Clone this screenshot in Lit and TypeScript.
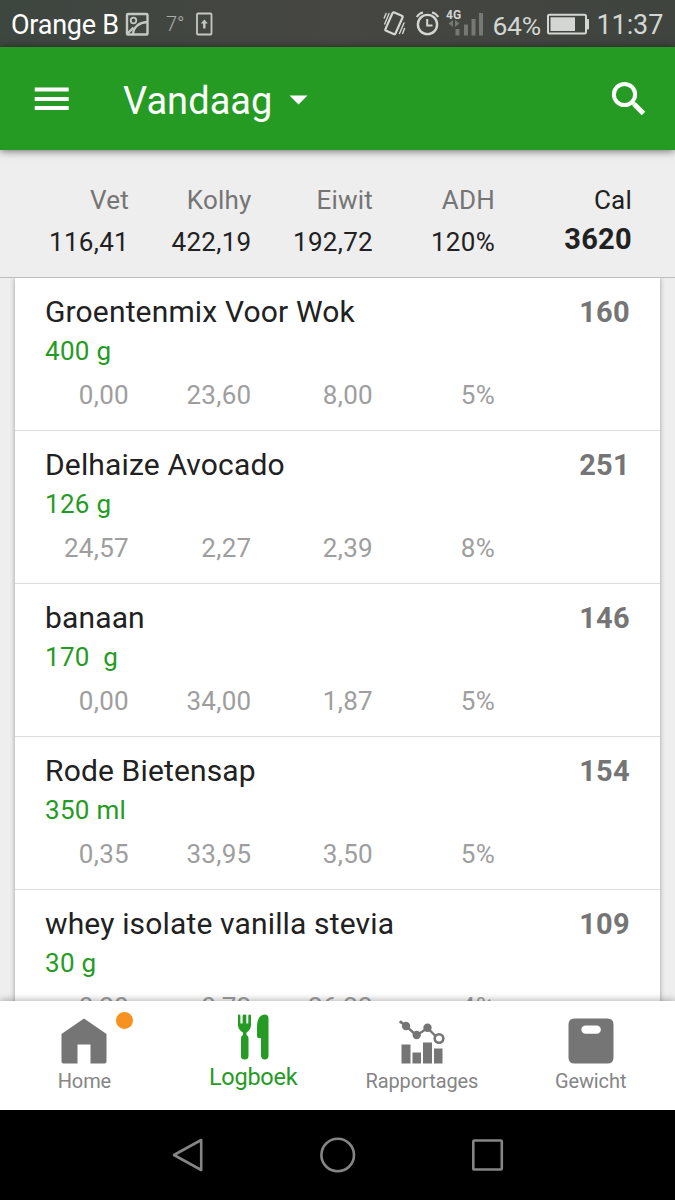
import { LitElement, html, css, svg } from "lit";
import { customElement, property } from "lit/decorators.js";
import { classMap } from "lit/directives/class-map.js";

interface Entry {
  name: string;
  amount: string;
  calories: string;
  values: string[];
}

const ENTRIES: Entry[] = [
  { name: "Groentenmix Voor Wok", amount: "400 g", calories: "160", values: ["0,00", "23,60", "8,00", "5%"] },
  { name: "Delhaize Avocado", amount: "126 g", calories: "251", values: ["24,57", "2,27", "2,39", "8%"] },
  { name: "banaan", amount: "170  g", calories: "146", values: ["0,00", "34,00", "1,87", "5%"] },
  { name: "Rode Bietensap", amount: "350 ml", calories: "154", values: ["0,35", "33,95", "3,50", "5%"] },
  { name: "whey isolate vanilla stevia", amount: "30 g", calories: "109", values: ["0,20", "0,72", "26,22", "4%"] },
];

const TOTALS = [
  { label: "Vet", value: "116,41" },
  { label: "Kolhy", value: "422,19" },
  { label: "Eiwit", value: "192,72" },
  { label: "ADH", value: "120%" },
  { label: "Cal", value: "3620" },
];

@customElement("status-bar")
class StatusBar extends LitElement {
  static styles = css`
    :host {
      display: flex;
      align-items: center;
      height: 47px;
      padding: 0 11px 0 11px;
      background: linear-gradient(90deg, #3e4640, #464642 50%, #3f443f);
      color: #d3d6d2;
      font-size: 27px;
      white-space: nowrap;
    }
    svg, .text { display: block; flex: none; }
    .carrier { color: #fff; width: 114px; letter-spacing: -0.25px; padding-top: 3px; }
    .temp { margin-left: 17px; width: 30px; font-size: 20px; font-weight: 300; color: #a9ada8; }
    .right { margin-left: auto; display: flex; align-items: center; }
    .text { padding-top: 3px; }
    .alarm { margin: 0 0.5px 0 1px; }
    .percent { margin-left: 1px; width: 52px; font-size: 26.5px; letter-spacing: -0.3px; }
    .time { margin-left: 5px; width: 67.5px; letter-spacing: -0.1px; }
    .net { font: 700 12px Roboto, sans-serif; }
  `;
  render() {
    return html`
      <span class="carrier">Orange B</span>
      <svg width="24" height="24" viewBox="0 0 24 24" fill="none" stroke="#c3c9c2" stroke-width="2.4">
        <rect x="2" y="2" width="20.5" height="20.5" rx="1" />
        <circle cx="8.5" cy="8.5" r="2.800" stroke-width="1.800" />
        <path d="M8 22C8.500 15 14 10.500 22 10" />
        <path d="M3 21L8.500 15.500" />
      </svg>
      <span class="temp">7°</span>
      <svg width="17" height="24" viewBox="0 0 17 24" fill="none" stroke="#c3c9c2" stroke-width="1.800">
        <rect x="1" y="1.500" width="14.500" height="21" rx="1" />
        <path d="M8.300 16.500V10" stroke-width="2.400" />
        <path d="M4.800 11.500L8.300 7.500L11.800 11.500Z" fill="#c3c9c2" stroke="none" />
      </svg>
      <div class="right">
        <svg width="24" height="27" viewBox="0 0 24 27" fill="none" stroke="#d3d6d2" stroke-linecap="round">
          <rect x="6.500" y="3.300" width="11" height="20" rx="1.500" transform="rotate(24 12 13.300)" stroke-width="2.200" />
          <path d="M4 3.500L2.200 8M7 3.500L2.700 14M22 13L17.500 23.500M22.500 18.500L20.700 23.500" stroke-width="1.400" />
        </svg>
        <svg class="alarm" width="36" height="27" viewBox="0 0 36 27" fill="none" stroke="#d3d6d2" stroke-width="2.400">
          <circle cx="20.500" cy="14.500" r="9.600" />
          <path d="M20.200 9V15.500H25.500" stroke-width="2" />
          <path d="M9.800 7Q12 3.200 16 2.500M31.200 7Q29 3.200 25 2.500" stroke-width="2.200" />
        </svg>
        <svg width="48" height="36" viewBox="0 0 48 36" fill="#747973">
          <text class="net" x="2" y="12.500" fill="#d3d6d2">4G</text>
          <rect x="11.500" y="23" width="4" height="6.500" />
          <rect x="20" y="18.500" width="4" height="11" />
          <rect x="27.500" y="13" width="4" height="16.500" />
          <rect x="35" y="7" width="4" height="22.500" />
          <path d="M9 14V21L4.500 17.500ZM11 14V21L15.500 17.500Z" />
        </svg>
        <span class="text percent">64%</span>
        <svg width="47" height="24" viewBox="0 0 47 24">
          <rect x="3" y="2.800" width="38" height="18.700" rx="1.500" fill="none" stroke="#d3d6d2" stroke-width="2" />
          <rect x="5.500" y="5.300" width="24.500" height="13.700" fill="#d3d6d2" />
          <path d="M42 7.500h1.500v9.500h-1.500z" fill="#d3d6d2" stroke="#d3d6d2" />
        </svg>
        <span class="text time">11:37</span>
      </div>
    `;
  }
}

@customElement("title-bar")
class TitleBar extends LitElement {
  static styles = css`
    :host {
      display: flex;
      align-items: center;
      height: 103px;
      padding: 0 28px 0 34px;
      background: #259b24;
      box-shadow: 0 1px 8px rgba(0, 0, 0, 0.55);
      position: relative;
      z-index: 2;
      color: #fff;
    }
    svg { display: block; flex: none; }
    .title { margin-left: 54px; padding-top: 4px; font-size: 38px; line-height: 50px; letter-spacing: 0.05px; }
    .arrow { margin: 2px 0 0 17px; }
    .search { margin-left: auto; }
  `;
  render() {
    return html`
      <svg width="35" height="24" viewBox="0 0 35 24" fill="#fff">
        <rect x="0.700" y="0.500" width="34" height="4" />
        <rect x="0.700" y="10" width="34" height="4" />
        <rect x="0.700" y="19" width="34" height="4" />
      </svg>
      <span class="title">Vandaag</span>
      <svg class="arrow" width="19" height="10" viewBox="0 0 19 10"><path d="M0.500 0.500H18.500L9.500 9.500Z" fill="#fff" /></svg>
      <svg class="search" width="36" height="36" viewBox="0 0 36 36" fill="none" stroke="#fff">
        <circle cx="13.500" cy="13.500" r="10.600" stroke-width="4" />
        <path d="M21 21L23 23" stroke-width="3.500" />
        <path d="M23 23L32.500 32.500" stroke-width="5" />
      </svg>
    `;
  }
}

@customElement("totals-bar")
class TotalsBar extends LitElement {
  static styles = css`
    :host {
      display: grid;
      grid-template-columns: 129px 122.5px 121.5px 122px 137px;
      height: 127px;
      border-bottom: 1px solid #bdbdbd;
      background: #eee;
      text-align: right;
      font-size: 26px;
      line-height: 40px;
      color: #212121;
    }
    .cell { padding-top: 30px; }
    .label { color: #757575; letter-spacing: 0.2px; }
    .value { padding-top: 2px; letter-spacing: 0.3px; }
    .strong .label { color: #212121; }
    .strong .value { padding-top: 0; margin-top: -1px; font-size: 29px; font-weight: 700; }
  `;
  render() {
    return TOTALS.map(
      (t, i) => html`
        <div class=${classMap({ cell: true, strong: i === TOTALS.length - 1 })}>
          <div class="label">${t.label}</div>
          <div class="value">${t.value}</div>
        </div>
      `,
    );
  }
}

@customElement("food-row")
class FoodRow extends LitElement {
  @property({ attribute: false }) entry!: Entry;
  static styles = css`
    :host {
      display: block;
      flex: none;
      box-sizing: border-box;
      height: 153px;
      padding-top: 14px;
      border-bottom: 1px solid #dcdcdc;
      background: #fff;
    }
    .head {
      display: flex;
      justify-content: space-between;
      padding: 0 30px;
      font-size: 30px;
      line-height: 40px;
      color: #212121;
      letter-spacing: 0.15px;
    }
    .calories { font-weight: 700; font-size: 29px; color: #757575; letter-spacing: 0.3px; }
    .amount {
      padding-left: 30px;
      font-size: 26px;
      line-height: 38px;
      color: #259b24;
      white-space: pre;
      letter-spacing: 0.3px;
    }
    .values {
      display: grid;
      grid-template-columns: 114px 122.5px 121.5px 122px;
      margin-top: 6px;
      text-align: right;
      font-size: 26px;
      line-height: 38px;
      color: #9e9e9e;
      letter-spacing: 0.3px;
    }
  `;
  render() {
    const e = this.entry;
    return html`
      <div class="head"><span>${e.name}</span><span class="calories">${e.calories}</span></div>
      <div class="amount">${e.amount}</div>
      <div class="values">${e.values.map((v) => html`<span>${v}</span>`)}</div>
    `;
  }
}

const TABS = [
  {
    label: "Home",
    active: false,
    badge: true,
    icon: svg`<path d="M23 0.500L45.500 16V43.500Q45.500 45.500 43.500 45.500H29.500V26.500H16.500V45.500H2.500Q0.500 45.500 0.500 43.500V16Z" />`,
  },
  {
    label: "Logboek",
    active: true,
    badge: false,
    icon: svg`
      <path d="M8 1.800Q8 0.500 9.200 0.500T10.400 1.800V9.500H12.600V1.800Q12.600 0.500 14.600 0.500T16.300 1.800V9.500H18.300V1.800Q18.300 0.500 19.800 0.500T21 1.800V11.500Q20.500 16 16.500 18.500V21Q18.500 22 18.500 24V42Q18.500 45.500 14.700 45.500T11 42V24Q11 22 13 21V18.500Q8.500 16 8 11.500Z" />
      <path d="M38.500 4.500V41.500Q38.500 45.500 34.800 45.500T31 41.500V24H28.500Q27 24 27 21.500V12Q27.500 1 35 0.500Q38.500 0.500 38.500 4.500Z" />`,
  },
  {
    label: "Rapportages",
    active: false,
    badge: false,
    icon: svg`
      <rect x="2.500" y="26.500" width="9" height="19" />
      <rect x="13.500" y="34.500" width="8.500" height="11" />
      <rect x="24" y="24.500" width="9" height="21" />
      <rect x="35" y="30.500" width="8.500" height="15" />
      <path d="M1.200 3.500L7 8L17.500 17.500L28.500 10L36.500 18" fill="none" stroke="currentColor" stroke-width="2.400" />
      <circle cx="1.800" cy="4" r="1.500" />
      <circle cx="7" cy="8" r="4.200" />
      <circle cx="17.700" cy="17" r="4.200" />
      <circle cx="28.500" cy="9.800" r="4.200" />
      <circle cx="40" cy="20.500" r="4.300" fill="none" stroke="currentColor" stroke-width="2.600" />`,
  },
  {
    label: "Gewicht",
    active: false,
    badge: false,
    icon: svg`<path fill-rule="evenodd" d="M6.500 0.500H39.500Q45.500 0.500 45.500 6.500V39.500Q45.500 45.500 39.500 45.500H6.500Q0.500 45.500 0.500 39.500V6.500Q0.500 0.500 6.500 0.500ZM17.500 7.500A4 4 0 0 0 17.500 15.800H28.700A4 4 0 0 0 28.700 7.500Z" />`,
  },
];

@customElement("tab-bar")
class TabBar extends LitElement {
  static styles = css`
    :host {
      display: grid;
      grid-template-columns: repeat(4, 1fr);
      height: 109px;
      background: #fff;
      box-shadow: 0 -1px 7px rgba(0, 0, 0, 0.3);
      position: relative;
      z-index: 2;
    }
    .tab {
      display: flex;
      flex-direction: column;
      align-items: center;
      padding-top: 17px;
      color: #757575;
      font-size: 20px;
      line-height: 26px;
      letter-spacing: -0.1px;
    }
    .active { padding-top: 13px; color: #259b24; font-size: 23.5px; letter-spacing: -0.25px; }
    .icon { position: relative; height: 46px; }
    .label { margin-top: 3.5px; color: #858585; }
    .active .label { margin-top: 4px; color: #259b24; }
    svg { display: block; fill: currentColor; }
    .badge {
      position: absolute;
      left: 55px;
      top: -6px;
      width: 17px;
      height: 17px;
      border-radius: 50%;
      background: #f79220;
    }
  `;
  render() {
    return TABS.map(
      (t) => html`
        <div class=${classMap({ tab: true, active: t.active })}>
          <div class="icon">
            <svg width="46" height="46" viewBox="0 0 46 46">${t.icon}</svg>
            ${t.badge ? html`<span class="badge"></span>` : ""}
          </div>
          <span class="label">${t.label}</span>
        </div>
      `,
    );
  }
}

@customElement("nav-keys")
class NavKeys extends LitElement {
  static styles = css`
    :host {
      display: flex;
      justify-content: center;
      align-items: center;
      gap: 114px;
      height: 90px;
      background: #000;
      position: relative;
      z-index: 3;
    }
    svg { display: block; fill: none; stroke: #858585; stroke-width: 2.6; stroke-linejoin: round; }
  `;
  render() {
    return html`
      <svg width="36" height="36" viewBox="0 0 36 36"><path d="M31.200 3L4 18L31.200 33Z" /></svg>
      <svg width="36" height="36" viewBox="0 0 36 36"><circle cx="17.700" cy="18" r="16.300" /></svg>
      <svg width="36" height="36" viewBox="0 0 36 36"><rect x="3.300" y="3.500" width="28.500" height="29" rx="1" /></svg>
    `;
  }
}

@customElement("app-root")
class AppRoot extends LitElement {
  static styles = css`
    :host {
      display: flex;
      flex-direction: column;
      height: 1200px;
      overflow: hidden;
      background: #eee;
      font-family: Roboto, sans-serif;
    }
    status-bar, title-bar, totals-bar, tab-bar, nav-keys { flex: none; }
    .list { flex: 1; min-height: 0; overflow: hidden; padding: 0 15px; }
    .card { box-shadow: 0 0 5px rgba(0, 0, 0, 0.35); }
  `;
  render() {
    return html`
      <status-bar></status-bar>
      <title-bar></title-bar>
      <totals-bar></totals-bar>
      <div class="list">
        <div class="card">${ENTRIES.map((e) => html`<food-row .entry=${e}></food-row>`)}</div>
      </div>
      <tab-bar></tab-bar>
      <nav-keys></nav-keys>
    `;
  }
}
